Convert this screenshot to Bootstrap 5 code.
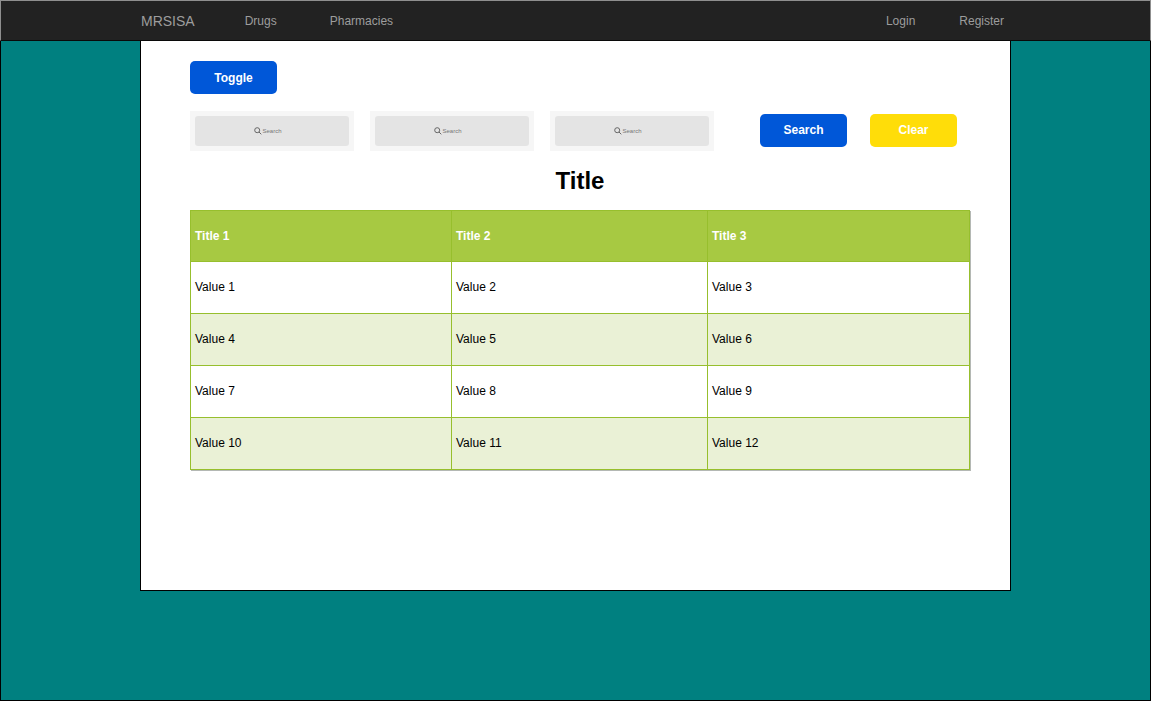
<!DOCTYPE html>
<html lang="en">
<head>
<meta charset="utf-8">
<meta name="viewport" content="width=device-width, initial-scale=1">
<title>MRSISA</title>
<link rel="stylesheet" href="https://cdn.jsdelivr.net/npm/bootstrap@5.3.0/dist/css/bootstrap.min.css">
<style>
  body { font-family: "Liberation Sans", Arial, sans-serif; font-size: 12px; line-height: 16px; color: #000; background: #fff; }
  .page-wrap { max-width: 871px; }
  .site-nav { background: #222; border: 1px solid #8f8f8f; border-bottom-color: #090909; height: 41px; }
  .site-nav a { color: #9d9d9d; text-decoration: none; }
  .site-nav a:hover { color: #fff; }
  .site-nav .page-wrap { padding: 0 7px 0 1px; }
  .site-nav .site-name { font-size: 14px; margin-right: 50px; }
  .links-start { gap: 53px; }
  .links-end { gap: 44px; }
  .backdrop { background: #008080; border: 1px solid #000; border-top: 0; }
  .panel { background: #fff; border: 1px solid #000; border-top: 0; padding: 20px 40px 120px 49px; }
  .btn-action { width: 87px; height: 33px; padding: 0; font-size: 12px; font-weight: 700; border: 0; border-radius: 5px; color: #fff; }
  .btn-blue { background: #0057d8; }
  .btn-yellow { background: #ffdd09; }
  .btn-blue:hover { background: #0049b8; color: #fff; }
  .btn-yellow:hover { background: #e8c800; color: #fff; }
  .filters { margin-top: 17px; gap: 16px; }
  .search-field { width: 164px; padding: 5px; background: #f6f6f6; }
  .search-field input { height: 30px; border: 0; border-radius: 3px; background: #e4e4e4; font-size: 6px; text-align: center; padding: 0; }
  .search-field input::placeholder { color: #777; opacity: 1; }
  .search-field svg { position: absolute; left: calc(50% - 18px); top: 16px; }
  .filter-actions { margin-left: 30px; gap: 23px; padding-bottom: 2px; }
  h1 { font-size: 24px; line-height: 28px; font-weight: 700; margin: 16px 0 15px; }
  .data-grid { border-collapse: collapse; table-layout: fixed; box-shadow: 1px 1px 0 #b4b8b4; }
  .data-grid th, .data-grid td { border: 1px solid #97bf2d; height: 52px; padding: 0 4px 2px; vertical-align: middle; }
  .data-grid th { background: #a7c942; color: #fff; height: 51px; padding-bottom: 0; }
  .data-grid tbody tr:nth-child(even) { background: #eaf1d6; }
  .col-first { width: 261px; }
  .col-second { width: 256px; }
</style>
</head>
<body class="d-flex flex-column min-vh-100">
<nav class="site-nav" aria-label="Main">
  <div class="page-wrap mx-auto h-100 d-flex align-items-center">
    <a class="site-name" href="#">MRSISA</a>
    <div class="links-start d-flex">
      <a href="#">Drugs</a>
      <a href="#">Pharmacies</a>
    </div>
    <div class="links-end d-flex ms-auto">
      <a href="#">Login</a>
      <a href="#">Register</a>
    </div>
  </div>
</nav>
<main class="backdrop flex-grow-1">
  <div class="panel page-wrap mx-auto">
    <button type="button" class="btn btn-action btn-blue d-block">Toggle</button>
    <form class="filters d-flex flex-wrap align-items-center">
      <div class="search-field position-relative">
        <input class="w-100 d-block" type="text" placeholder="Search" aria-label="Search title 1">
        <svg width="8" height="8" viewBox="0 0 8 8" fill="none" stroke="#666" aria-hidden="true"><circle cx="3.2" cy="3.2" r="2.5"/><path d="M5 5l2.3 2.3"/></svg>
      </div>
      <div class="search-field position-relative">
        <input class="w-100 d-block" type="text" placeholder="Search" aria-label="Search title 2">
        <svg width="8" height="8" viewBox="0 0 8 8" fill="none" stroke="#666" aria-hidden="true"><circle cx="3.2" cy="3.2" r="2.5"/><path d="M5 5l2.3 2.3"/></svg>
      </div>
      <div class="search-field position-relative">
        <input class="w-100 d-block" type="text" placeholder="Search" aria-label="Search title 3">
        <svg width="8" height="8" viewBox="0 0 8 8" fill="none" stroke="#666" aria-hidden="true"><circle cx="3.2" cy="3.2" r="2.5"/><path d="M5 5l2.3 2.3"/></svg>
      </div>
      <div class="filter-actions d-flex">
        <button type="button" class="btn btn-action btn-blue">Search</button>
        <button type="reset" class="btn btn-action btn-yellow">Clear</button>
      </div>
    </form>
    <h1 class="text-center">Title</h1>
    <table class="data-grid w-100">
      <colgroup><col class="col-first"><col class="col-second"><col class="col-third"></colgroup>
      <thead>
        <tr><th scope="col">Title 1</th><th scope="col">Title 2</th><th scope="col">Title 3</th></tr>
      </thead>
      <tbody>
        <tr><td>Value 1</td><td>Value 2</td><td>Value 3</td></tr>
        <tr><td>Value 4</td><td>Value 5</td><td>Value 6</td></tr>
        <tr><td>Value 7</td><td>Value 8</td><td>Value 9</td></tr>
        <tr><td>Value 10</td><td>Value 11</td><td>Value 12</td></tr>
      </tbody>
    </table>
  </div>
</main>
<script src="https://cdn.jsdelivr.net/npm/bootstrap@5.3.0/dist/js/bootstrap.bundle.min.js"></script>
</body>
</html>
